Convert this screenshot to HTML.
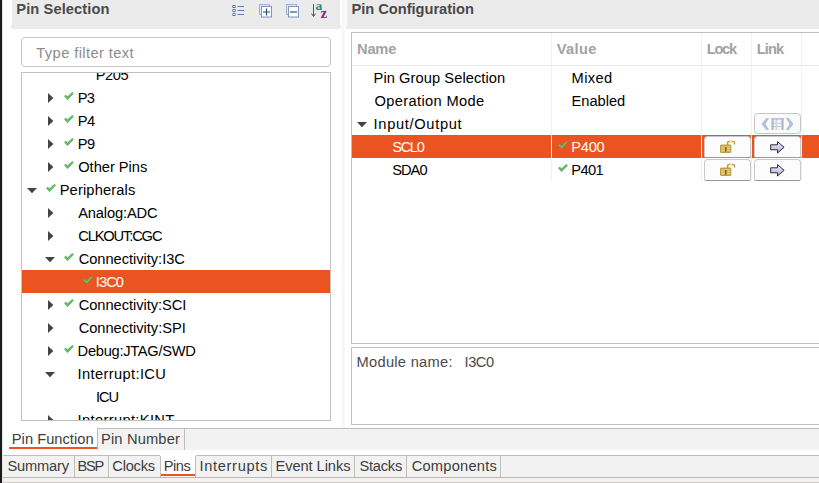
<!DOCTYPE html>
<html><head><meta charset="utf-8"><title>Pins</title>
<style>
html,body{margin:0;padding:0;}
body{width:819px;height:483px;overflow:hidden;background:#fff;position:relative;
 font-family:"Liberation Sans",sans-serif;font-size:14.67px;color:#000;}
div,span{position:absolute;box-sizing:border-box;white-space:nowrap;}
.t{line-height:20px;height:20px;}
.hd{background:#ebebeb;}
.ttl{font-weight:bold;color:#4a4a4a;}
.box{border:1px solid #c0c0c0;background:#fff;overflow:hidden;}
.sel{background:#e95420;}
svg{position:absolute;overflow:visible;}
.th{color:#a2a2a2;font-weight:bold;}
.btn{background:#fcfcfc;border:1px solid #c9c9c9;border-bottom:1px solid #999;border-radius:4px 4px 2px 2px;}
.tab{color:#3d3d3d;}
.vd{width:1px;background:#bdbdbd;}
.gl{width:1px;background:#f1f1f1;}
</style></head><body>
<!-- left dark strip -->
<div style="left:0;top:0;width:2px;height:483px;background:#1b1b1b"></div>
<div style="left:2px;top:0;width:1px;height:483px;background:#e6e6e6"></div>

<!-- headers -->
<div class="hd" style="left:12px;top:0;width:328px;height:29px"></div>
<div class="hd" style="left:11px;top:25px;width:330px;height:4px"></div>
<div class="hd" style="left:347px;top:0;width:472px;height:29px"></div>
<div class="hd" style="left:346px;top:25px;width:473px;height:4px"></div>
<div style="left:342px;top:0;width:3px;height:428px;background:#f7f7f7"></div>

<!-- toolbar icons -->
<svg style="left:232px;top:4px" width="13" height="13" viewBox="0 0 13 13">
 <g fill="#e8eef8" stroke="#4d72b0" stroke-width="1"><rect x="1" y="1.5" width="2" height="2"/><rect x="1" y="5.5" width="2" height="2"/><rect x="1" y="9.5" width="2" height="2"/></g>
 <g stroke="#5b7db5" stroke-width="1"><path d="M5.5 2.5H12M5.5 6.5H12M5.5 10.5H12"/></g>
</svg>
<svg style="left:259px;top:4px" width="14" height="14" viewBox="0 0 14 14">
 <rect x="0.5" y="0.5" width="10" height="10" fill="#dfe7f3" stroke="#9fb2d0"/>
 <rect x="2.5" y="2.5" width="10" height="10.5" fill="#fff" stroke="#7f96bd"/>
 <path d="M4 8H11M7.5 4.5V11.5" stroke="#1d4d8c" stroke-width="1.15" fill="none"/>
</svg>
<svg style="left:286px;top:4px" width="14" height="14" viewBox="0 0 14 14">
 <rect x="0.5" y="0.5" width="10" height="10" fill="#dfe7f3" stroke="#9fb2d0"/>
 <rect x="2.5" y="2.5" width="10" height="10.5" fill="#fff" stroke="#7f96bd"/>
 <path d="M4 8H11" stroke="#1d4d8c" stroke-width="1.15" fill="none"/>
</svg>
<svg style="left:310px;top:1px" width="20" height="20" viewBox="0 0 20 20">
 <path d="M3.5 3V15M1.5 12.5L3.5 15.5L5.5 12.5" stroke="#555" stroke-width="1" fill="none"/>
 <text x="5.6" y="8.6" font-family="Liberation Serif,serif" font-weight="bold" font-size="13.5" fill="#2a8a74">a</text>
 <text x="10.6" y="16.9" font-family="Liberation Serif,serif" font-weight="bold" font-size="15" fill="#8a1f8a">z</text>
</svg>

<!-- filter box -->
<div style="left:21px;top:37px;width:310px;height:30px;border:1px solid #c4c4c4;border-radius:4px;background:#fff"></div>

<div class="box" style="left:21px;top:72px;width:310px;height:349px">
<div class="sel" style="left:0;top:197px;width:100%;height:23px"></div>
<span class="t" style="left:73.70px;top:-8px;letter-spacing:-0.393px;">P205</span>
<span class="t" style="left:55.80px;top:15px;letter-spacing:-0.876px;">P3</span>
<span class="t" style="left:55.80px;top:38px;letter-spacing:-0.576px;">P4</span>
<span class="t" style="left:55.80px;top:61px;letter-spacing:-0.576px;">P9</span>
<span class="t" style="left:56.20px;top:84px;letter-spacing:-0.012px;">Other Pins</span>
<span class="t" style="left:37.70px;top:107px;letter-spacing:0.15px;">Peripherals</span>
<span class="t" style="left:56.20px;top:130px;letter-spacing:-0.141px;">Analog:ADC</span>
<span class="t" style="left:56.20px;top:153px;letter-spacing:-1.131px;">CLKOUT:CGC</span>
<span class="t" style="left:56.70px;top:176px;letter-spacing:-0.035px;">Connectivity:I3C</span>
<span class="t" style="left:73.80px;top:199px;letter-spacing:-0.936px;color:#fff">I3C0</span>
<span class="t" style="left:56.70px;top:222px;letter-spacing:-0.044px;">Connectivity:SCI</span>
<span class="t" style="left:56.70px;top:245px;letter-spacing:-0.03px;">Connectivity:SPI</span>
<span class="t" style="left:55.60px;top:268px;letter-spacing:-0.278px;">Debug:JTAG/SWD</span>
<span class="t" style="left:55.60px;top:291px;letter-spacing:0.366px;">Interrupt:ICU</span>
<span class="t" style="left:73.90px;top:314px;letter-spacing:-1.078px;">ICU</span>
<span class="t" style="left:55.60px;top:337px;letter-spacing:0.355px;">Interrupt:KINT</span>
<svg style="left:25.799999999999997px;top:342px" width="6" height="10" viewBox="0 0 6 10"><path d="M0 0L5.4 5L0 10Z" fill="#444"/></svg>
</div>
<svg style="left:47.8px;top:92.9px" width="6" height="10" viewBox="0 0 6 10"><path d="M0 0L5.4 5L0 10Z" fill="#444"/></svg>
<svg style="left:47.8px;top:115.9px" width="6" height="10" viewBox="0 0 6 10"><path d="M0 0L5.4 5L0 10Z" fill="#444"/></svg>
<svg style="left:47.8px;top:138.9px" width="6" height="10" viewBox="0 0 6 10"><path d="M0 0L5.4 5L0 10Z" fill="#444"/></svg>
<svg style="left:47.8px;top:161.9px" width="6" height="10" viewBox="0 0 6 10"><path d="M0 0L5.4 5L0 10Z" fill="#444"/></svg>
<svg style="left:47.8px;top:207.9px" width="6" height="10" viewBox="0 0 6 10"><path d="M0 0L5.4 5L0 10Z" fill="#444"/></svg>
<svg style="left:47.8px;top:230.9px" width="6" height="10" viewBox="0 0 6 10"><path d="M0 0L5.4 5L0 10Z" fill="#444"/></svg>
<svg style="left:47.8px;top:299.9px" width="6" height="10" viewBox="0 0 6 10"><path d="M0 0L5.4 5L0 10Z" fill="#444"/></svg>
<svg style="left:47.8px;top:322.9px" width="6" height="10" viewBox="0 0 6 10"><path d="M0 0L5.4 5L0 10Z" fill="#444"/></svg>
<svg style="left:47.8px;top:345.9px" width="6" height="10" viewBox="0 0 6 10"><path d="M0 0L5.4 5L0 10Z" fill="#444"/></svg>
<svg style="left:27.0px;top:187.8px" width="10" height="6" viewBox="0 0 10 6"><path d="M0 0H10L5 5.2Z" fill="#444"/></svg>
<svg style="left:45.0px;top:256.8px" width="10" height="6" viewBox="0 0 10 6"><path d="M0 0H10L5 5.2Z" fill="#444"/></svg>
<svg style="left:45.0px;top:371.8px" width="10" height="6" viewBox="0 0 10 6"><path d="M0 0H10L5 5.2Z" fill="#444"/></svg>
<svg style="left:64.2px;top:92.1px" width="10" height="8" viewBox="0 0 10 8"><path d="M0.1 4.3L1.8 2.7L3.5 4.6L8.3 0L9.8 1.5L3.5 8Z" fill="#55ad55"/><path d="M1.2 3.9L3.5 6.3L9 0.8" stroke="#84cc84" stroke-width="0.8" fill="none"/></svg>
<svg style="left:64.2px;top:115.1px" width="10" height="8" viewBox="0 0 10 8"><path d="M0.1 4.3L1.8 2.7L3.5 4.6L8.3 0L9.8 1.5L3.5 8Z" fill="#55ad55"/><path d="M1.2 3.9L3.5 6.3L9 0.8" stroke="#84cc84" stroke-width="0.8" fill="none"/></svg>
<svg style="left:64.2px;top:138.1px" width="10" height="8" viewBox="0 0 10 8"><path d="M0.1 4.3L1.8 2.7L3.5 4.6L8.3 0L9.8 1.5L3.5 8Z" fill="#55ad55"/><path d="M1.2 3.9L3.5 6.3L9 0.8" stroke="#84cc84" stroke-width="0.8" fill="none"/></svg>
<svg style="left:64.2px;top:161.1px" width="10" height="8" viewBox="0 0 10 8"><path d="M0.1 4.3L1.8 2.7L3.5 4.6L8.3 0L9.8 1.5L3.5 8Z" fill="#55ad55"/><path d="M1.2 3.9L3.5 6.3L9 0.8" stroke="#84cc84" stroke-width="0.8" fill="none"/></svg>
<svg style="left:64.2px;top:253.1px" width="10" height="8" viewBox="0 0 10 8"><path d="M0.1 4.3L1.8 2.7L3.5 4.6L8.3 0L9.8 1.5L3.5 8Z" fill="#55ad55"/><path d="M1.2 3.9L3.5 6.3L9 0.8" stroke="#84cc84" stroke-width="0.8" fill="none"/></svg>
<svg style="left:64.2px;top:299.1px" width="10" height="8" viewBox="0 0 10 8"><path d="M0.1 4.3L1.8 2.7L3.5 4.6L8.3 0L9.8 1.5L3.5 8Z" fill="#55ad55"/><path d="M1.2 3.9L3.5 6.3L9 0.8" stroke="#84cc84" stroke-width="0.8" fill="none"/></svg>
<svg style="left:64.2px;top:345.1px" width="10" height="8" viewBox="0 0 10 8"><path d="M0.1 4.3L1.8 2.7L3.5 4.6L8.3 0L9.8 1.5L3.5 8Z" fill="#55ad55"/><path d="M1.2 3.9L3.5 6.3L9 0.8" stroke="#84cc84" stroke-width="0.8" fill="none"/></svg>
<svg style="left:46.2px;top:184.1px" width="10" height="8" viewBox="0 0 10 8"><path d="M0.1 4.3L1.8 2.7L3.5 4.6L8.3 0L9.8 1.5L3.5 8Z" fill="#55ad55"/><path d="M1.2 3.9L3.5 6.3L9 0.8" stroke="#84cc84" stroke-width="0.8" fill="none"/></svg>
<svg style="left:82.5px;top:276.1px" width="10" height="8" viewBox="0 0 10 8"><path d="M0.1 4.3L1.8 2.7L3.5 4.6L8.3 0L9.8 1.5L3.5 8Z" fill="#55ad55"/><path d="M1.2 3.9L3.5 6.3L9 0.8" stroke="#84cc84" stroke-width="0.8" fill="none"/></svg>
<div class="box" style="left:351px;top:32px;width:480px;height:312px"></div>
<div style="left:352px;top:65px;width:467px;height:1px;background:#e9e9e9"></div>
<div class="sel" style="left:352px;top:135px;width:467px;height:23px"></div>
<div class="gl" style="left:551px;top:33px;height:148px"></div>
<div class="gl" style="left:701px;top:33px;height:148px"></div>
<div class="gl" style="left:751px;top:33px;height:148px"></div>
<div class="gl" style="left:801px;top:33px;height:148px"></div>
<svg style="left:357.0px;top:121.8px" width="10" height="6" viewBox="0 0 10 6"><path d="M0 0H10L5 5.2Z" fill="#444"/></svg>
<div style="left:754px;top:113px;width:47px;height:21px;border:1px solid #c6c6c6;border-radius:3.5px;background:#fafafa"></div>
<svg style="left:760.5px;top:117.8px" width="33" height="12" viewBox="0 0 33 12"><path d="M0.4 6L5.4 0.1H8.2L4.4 6L8.2 11.9H5.4Z" fill="#b1c0d4"/><path d="M32.6 6L27.6 0.1H24.8L28.6 6L24.8 11.9H27.6Z" fill="#b1c0d4"/><rect x="10.5" y="0.2" width="12.1" height="11.7" fill="#f4f6f9"/><path d="M10.5 5.3H22.6M10.5 8.5H22.6" stroke="#c3ccda" stroke-width="1" fill="none"/><path d="M15.45 0.2V11.9" stroke="#d3d9e4" stroke-width="2.1" fill="none"/><path d="M11.6 0.2V11.9M21.5 0.2V11.9" stroke="#aeb9cb" stroke-width="2.2" fill="none"/><path d="M10.5 0.9H22.6" stroke="#b3bdcd" stroke-width="1.5" fill="none"/></svg>
<div class="btn" style="left:704px;top:136px;width:47px;height:22px"></div>
<div class="btn" style="left:754px;top:136px;width:47px;height:22px"></div>
<svg style="left:719.7px;top:140.4px" width="16" height="13" viewBox="0 0 16 13"><path d="M7.6 5V2.8Q7.6 1.4 9 1.4H13Q14.5 1.4 14.5 2.8V4.6" fill="none" stroke="#c2a038" stroke-width="1.5"/><path d="M9.8 1.3H12.4" stroke="#f6ecc0" stroke-width="1"/><rect x="0.5" y="5" width="10.4" height="7.5" rx="0.6" fill="#cdab42" stroke="#b08f30" stroke-width="0.8"/><path d="M1.2 6.9H10.2M1.2 8.8H10.2M1.2 10.7H10.2" stroke="#f1e2a4" stroke-width="0.8"/><rect x="4.9" y="7" width="1.7" height="4.6" fill="#85691f"/></svg>
<svg style="left:769.8px;top:140.6px" width="15" height="13" viewBox="0 0 15 13"><defs><linearGradient id="ag0" x1="0" y1="0" x2="0" y2="1"><stop offset="0" stop-color="#f4f4fb"/><stop offset="1" stop-color="#a9a9d6"/></linearGradient></defs><path d="M0.7 3.8H7.5V0.6L14.1 6.3L7.5 12V8.8H0.7Z" fill="url(#ag0)" stroke="#2c2c2c" stroke-width="1" stroke-linejoin="round"/></svg>
<div class="btn" style="left:704px;top:159px;width:47px;height:22px"></div>
<div class="btn" style="left:754px;top:159px;width:47px;height:22px"></div>
<svg style="left:719.7px;top:163.4px" width="16" height="13" viewBox="0 0 16 13"><path d="M7.6 5V2.8Q7.6 1.4 9 1.4H13Q14.5 1.4 14.5 2.8V4.6" fill="none" stroke="#c2a038" stroke-width="1.5"/><path d="M9.8 1.3H12.4" stroke="#f6ecc0" stroke-width="1"/><rect x="0.5" y="5" width="10.4" height="7.5" rx="0.6" fill="#cdab42" stroke="#b08f30" stroke-width="0.8"/><path d="M1.2 6.9H10.2M1.2 8.8H10.2M1.2 10.7H10.2" stroke="#f1e2a4" stroke-width="0.8"/><rect x="4.9" y="7" width="1.7" height="4.6" fill="#85691f"/></svg>
<svg style="left:769.8px;top:163.6px" width="15" height="13" viewBox="0 0 15 13"><defs><linearGradient id="ag1" x1="0" y1="0" x2="0" y2="1"><stop offset="0" stop-color="#f4f4fb"/><stop offset="1" stop-color="#a9a9d6"/></linearGradient></defs><path d="M0.7 3.8H7.5V0.6L14.1 6.3L7.5 12V8.8H0.7Z" fill="url(#ag1)" stroke="#2c2c2c" stroke-width="1" stroke-linejoin="round"/></svg>
<svg style="left:558px;top:141.2px" width="10" height="8" viewBox="0 0 10 8"><path d="M0.1 4.3L1.8 2.7L3.5 4.6L8.3 0L9.8 1.5L3.5 8Z" fill="#55ad55"/><path d="M1.2 3.9L3.5 6.3L9 0.8" stroke="#84cc84" stroke-width="0.8" fill="none"/></svg>
<svg style="left:558px;top:164.2px" width="10" height="8" viewBox="0 0 10 8"><path d="M0.1 4.3L1.8 2.7L3.5 4.6L8.3 0L9.8 1.5L3.5 8Z" fill="#55ad55"/><path d="M1.2 3.9L3.5 6.3L9 0.8" stroke="#84cc84" stroke-width="0.8" fill="none"/></svg>
<div class="box" style="left:351px;top:347px;width:480px;height:78px"></div>
<div style="left:3px;top:428px;width:816px;height:22px;background:#f2f2f2;border-top:1px solid #bdbdbd"></div>
<div style="left:3px;top:428px;width:94px;height:22px;background:#fff"></div>
<div style="left:9px;top:447px;width:88px;height:2px;background:#e95420"></div>
<div class="vd" style="left:97px;top:428px;height:22px"></div>
<div class="vd" style="left:184px;top:428px;height:22px"></div>
<!-- bottom tab bar -->
<div style="left:3px;top:455px;width:816px;height:23px;background:#f2f2f2;border-top:1px solid #bdbdbd;border-bottom:1px solid #bcb8b4"></div>
<div style="left:3px;top:478px;width:816px;height:5px;background:#f3f2f1"></div>
<div style="left:3px;top:482px;width:816px;height:1px;background:#cfcbc7"></div>
<div style="left:160px;top:455px;width:36px;height:22px;background:#fff"></div>
<div style="left:161px;top:474px;width:34px;height:2px;background:#e95420"></div>
<div class="vd" style="left:74px;top:456px;height:21px"></div>
<div class="vd" style="left:108px;top:456px;height:21px"></div>
<div class="vd" style="left:160px;top:456px;height:21px"></div>
<div class="vd" style="left:195px;top:456px;height:21px"></div>
<div class="vd" style="left:271px;top:456px;height:21px"></div>
<div class="vd" style="left:354px;top:456px;height:21px"></div>
<div class="vd" style="left:406px;top:456px;height:21px"></div>
<div class="vd" style="left:500px;top:456px;height:21px"></div>
<span class="t ttl" style="left:16.30px;top:-1px;letter-spacing:0.093px;">Pin Selection</span>
<span class="t ttl" style="left:351.50px;top:-1px;letter-spacing:-0.03px;">Pin Configuration</span>
<span class="t" style="left:36.30px;top:43px;letter-spacing:0.41px;color:#8c8c8c">Type filter text</span>
<span class="t th" style="left:357.00px;top:39px;letter-spacing:-0.189px;">Name</span>
<span class="t th" style="left:556.80px;top:39px;letter-spacing:0.315px;">Value</span>
<span class="t th" style="left:706.70px;top:39px;letter-spacing:-1.252px;">Lock</span>
<span class="t th" style="left:756.70px;top:39px;letter-spacing:-0.892px;">Link</span>
<span class="t" style="left:373.60px;top:68px;letter-spacing:0.067px;">Pin Group Selection</span>
<span class="t" style="left:571.60px;top:68px;letter-spacing:0.339px;">Mixed</span>
<span class="t" style="left:374.60px;top:91px;letter-spacing:0.343px;">Operation Mode</span>
<span class="t" style="left:571.60px;top:91px;letter-spacing:-0.023px;">Enabled</span>
<span class="t" style="left:373.60px;top:114px;letter-spacing:0.673px;">Input/Output</span>
<span class="t" style="left:392.20px;top:137px;letter-spacing:-1.337px;color:#fff">SCL0</span>
<span class="t" style="left:571.30px;top:137px;letter-spacing:-0.259px;color:#fff">P400</span>
<span class="t" style="left:392.20px;top:160px;letter-spacing:-0.978px;">SDA0</span>
<span class="t" style="left:571.30px;top:160px;letter-spacing:-0.593px;">P401</span>
<span class="t" style="left:356.60px;top:352px;letter-spacing:0.272px;color:#4a4a4a">Module name:</span>
<span class="t" style="left:464.50px;top:352px;letter-spacing:-0.436px;color:#4a4a4a">I3C0</span>
<span class="t tab" style="left:11.80px;top:429px;letter-spacing:0.026px;">Pin Function</span>
<span class="t tab" style="left:101.00px;top:429px;letter-spacing:0.167px;">Pin Number</span>
<span class="t tab" style="left:7.40px;top:456px;letter-spacing:-0.163px;">Summary</span>
<span class="t tab" style="left:77.60px;top:456px;letter-spacing:-1.376px;">BSP</span>
<span class="t tab" style="left:112.30px;top:456px;letter-spacing:-0.23px;">Clocks</span>
<span class="t tab" style="left:163.80px;top:456px;letter-spacing:-0.494px;">Pins</span>
<span class="t tab" style="left:199.50px;top:456px;letter-spacing:0.658px;">Interrupts</span>
<span class="t tab" style="left:275.50px;top:456px;letter-spacing:-0.074px;">Event Links</span>
<span class="t tab" style="left:359.40px;top:456px;letter-spacing:-0.231px;">Stacks</span>
<span class="t tab" style="left:411.70px;top:456px;letter-spacing:0.225px;">Components</span>
</body></html>
